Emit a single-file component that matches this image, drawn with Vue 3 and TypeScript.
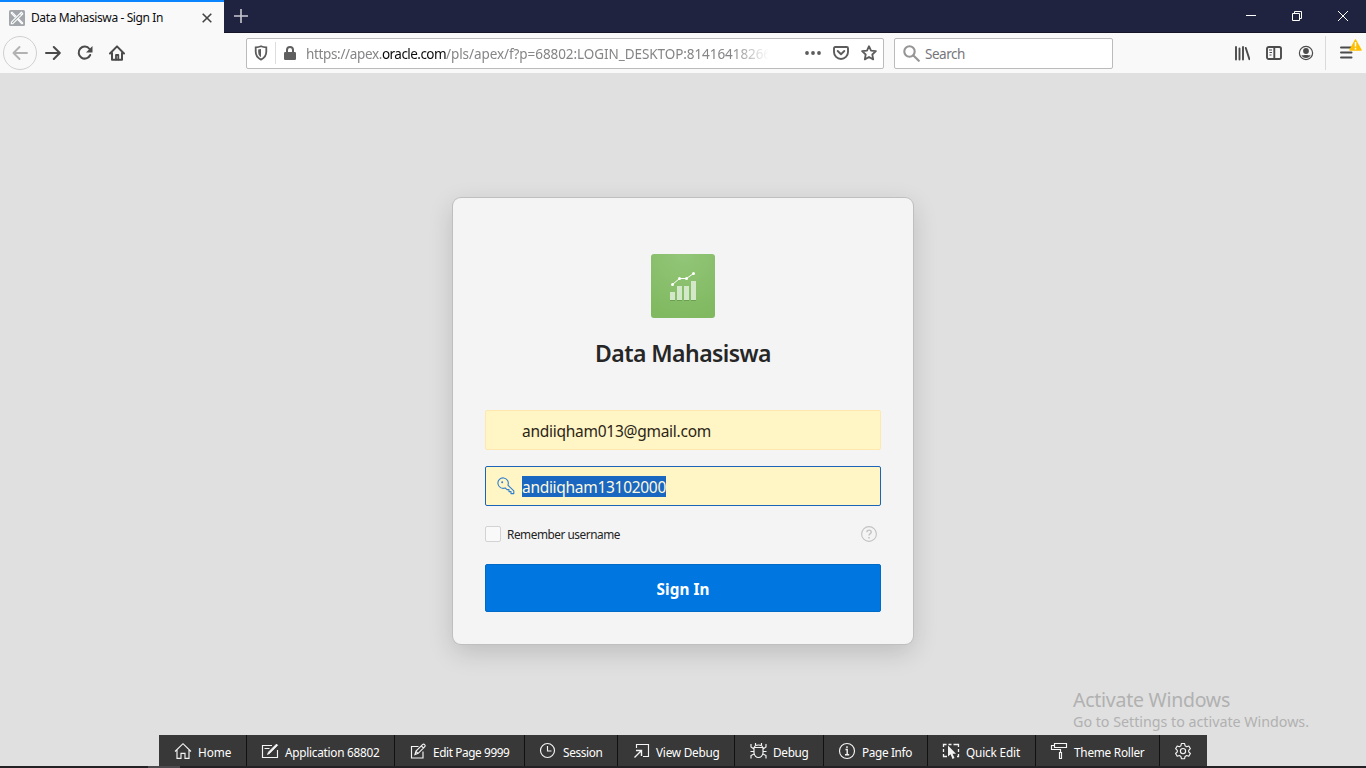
<script setup lang="ts">
import type { Directive } from 'vue'

interface ToolItem {
  id: string
  label: string
  width: number
  textWidth: number
  iconLeft: number
  textLeft: number
}

// Tracks a label so that it occupies the given number of pixels.
const vFit: Directive<HTMLElement, number> = {
  mounted(el, binding) {
    const natural = el.getBoundingClientRect().width
    const count = (el.textContent ?? '').length
    if (count > 0) el.style.letterSpacing = `${(binding.value - natural) / count}px`
  },
}

const tools: ToolItem[] = [
  { id: 'home', label: 'Home', width: 88, textWidth: 33.5, iconLeft: 15, textLeft: 39 },
  { id: 'app', label: 'Application 68802', width: 148, textWidth: 94.5, iconLeft: 14, textLeft: 38 },
  { id: 'edit', label: 'Edit Page 9999', width: 130, textWidth: 76.5, iconLeft: 14, textLeft: 38 },
  { id: 'session', label: 'Session', width: 93, textWidth: 39.5, iconLeft: 14, textLeft: 38 },
  { id: 'view', label: 'View Debug', width: 117, textWidth: 63.5, iconLeft: 14, textLeft: 38 },
  { id: 'debug', label: 'Debug', width: 89, textWidth: 35.5, iconLeft: 14, textLeft: 38 },
  { id: 'info', label: 'Page Info', width: 104, textWidth: 50, iconLeft: 14, textLeft: 38 },
  { id: 'quick', label: 'Quick Edit', width: 108, textWidth: 54, iconLeft: 14, textLeft: 38 },
  { id: 'theme', label: 'Theme Roller', width: 124, textWidth: 70.5, iconLeft: 14, textLeft: 38 },
  { id: 'gear', label: '', width: 47, textWidth: 0, iconLeft: 14, textLeft: 38 },
]
</script>

<template>
  <div class="screen">
    <header class="titlebar">
      <div class="tab">
        <svg class="favicon" width="16" height="16" viewBox="0 0 16 16">
          <rect width="16" height="16" rx="1.5" fill="#a3a7ab" />
          <g fill="none" stroke="#fff" stroke-width="1.1" stroke-linecap="round" stroke-linejoin="round">
            <path d="M3.2 2.4 7 6.2M2.4 3.4 6 7M2.4 3.4C2 2.6 2.6 2 3.2 2.4M9.4 8.6l4.2 4.2M8.6 9.4l4 4.2M13.6 12.8c.4.8-.4 1.2-1 .8" />
            <path d="M12.4 2.2 2.4 12.2l-.1 1.6 1.6-.2L13.8 3.8zM11.2 3.4l1.5 1.5" />
          </g>
        </svg>
        <div class="tab-title"><span v-fit="132">Data Mahasiswa - Sign In</span></div>
        <svg class="tab-close" width="10" height="10" viewBox="0 0 10 10"><path d="m.7.7 8.6 8.6M9.3.7.7 9.3" stroke="#444" stroke-width="1.6" /></svg>
      </div>
      <svg class="new-tab" width="14" height="14" viewBox="0 0 14 14"><path d="M7 0v14M0 7h14" stroke="#c9c9d2" stroke-width="1.6" /></svg>
      <div class="window-controls">
        <svg width="46" height="33" viewBox="0 0 46 33"><path d="M18 15.5h10" stroke="#fff" /></svg>
        <svg width="46" height="33" viewBox="0 0 46 33"><path d="M18.5 13.5h7v7h-7zM20.5 13.5v-2h7v7h-2" fill="none" stroke="#fff" /></svg>
        <svg width="46" height="33" viewBox="0 0 46 33"><path d="m18 11 10 10M28 11 18 21" stroke="#fff" /></svg>
      </div>
    </header>

    <nav class="navbar">
      <div class="back">
        <svg width="16" height="16" viewBox="0 0 16 16" fill="none" stroke="#b2b2b3" stroke-width="1.9" stroke-linecap="round" stroke-linejoin="round"><path d="M15 8H1.5M7.500 2l-6 6 6 6" /></svg>
      </div>
      <svg class="forward" width="16" height="16" viewBox="0 0 16 16" fill="none" stroke="#4b4b4c" stroke-width="2" stroke-linecap="round" stroke-linejoin="round"><path d="M1 8h13.5M8.8 2l6 6-6 6" /></svg>
      <svg class="reload" width="16" height="16" viewBox="0 0 16 16" fill="none" stroke="#4b4b4c" stroke-width="2"><path d="M13.2 10A6 6 0 1 1 12.5 4" stroke-linecap="round" /><path d="M15.5 1v6.6H9z" fill="#4b4b4c" stroke="none" /></svg>
      <svg class="home" width="16" height="16" viewBox="0 0 16 16" fill="none" stroke="#4b4b4c" stroke-width="2" stroke-linecap="round" stroke-linejoin="round"><path d="M1 8.5 8 1.4l7 7.1M3 8v6.8h10V8" /><path d="M7 14.5V10h2.3v4.5" stroke-width="1.8" /></svg>

      <div class="urlbar">
        <svg class="shield" width="14" height="16" viewBox="0 0 14 16"><path d="M7 1.2c2 .9 3.5 1.1 5.3 1.2v4.2c0 4.2-2 6.6-5.3 8-3.3-1.4-5.3-3.8-5.3-8V2.400C3.500 2.300 5 2.100 7 1.200z" fill="none" stroke="#5c5c5d" stroke-width="1.8" /><path d="M7 4v8.300C5 11 4.200 9.200 4.200 6.900V4.500z" fill="#5c5c5d" /></svg>
        <i class="url-divider"></i>
        <svg class="lock" width="12" height="14" viewBox="0 0 12 14"><path d="M3 7V4a3 3 0 0 1 6 0v3" fill="none" stroke="#5f5f60" stroke-width="2" /><rect x="0" y="6" width="12" height="8" rx="1.2" fill="#5f5f60" /></svg>
        <div class="url"><span v-fit="76">https://apex.</span><b v-fit="64">oracle.com</b><span v-fit="325">/pls/apex/f?p=68802:LOGIN_DESKTOP:81416418266</span></div>
        <svg class="dots" width="16" height="4" viewBox="0 0 16 4" fill="#5c5c5d"><circle cx="2" cy="2" r="1.9" /><circle cx="8" cy="2" r="1.9" /><circle cx="14" cy="2" r="1.9" /></svg>
        <svg class="pocket" width="16" height="14" viewBox="0 0 16 14" fill="none" stroke="#5c5c5d" stroke-width="1.9" stroke-linecap="round" stroke-linejoin="round"><path d="M2.2 1h11.600Q15 1 15 2.200V6A7 7 0 0 1 1 6V2.200Q1 1 2.200 1z" /><path d="m4.700 5 3.300 3.200L11.300 5" /></svg>
        <svg class="star" width="16" height="16" viewBox="0 0 16 16" fill="none" stroke="#5c5c5d" stroke-width="1.8" stroke-linejoin="round"><path d="m8 1.200 2 4.400 4.900.6-3.600 3.300.9 4.900L8 12l-4.200 2.400.9-4.900L1.100 6.200 6 5.600z" /></svg>
      </div>
      <div class="search">
        <svg width="17" height="17" viewBox="0 0 17 17" fill="none" stroke="#959596" stroke-width="2.100"><circle cx="6.500" cy="6.500" r="5.200" /><path d="m10.400 10.400 5.400 5.400" stroke-linecap="round" /></svg>
        <span v-fit="40">Search</span>
      </div>

      <div class="nav-right">
        <svg class="library" width="16" height="16" viewBox="0 0 16 16" stroke="#4b4b4c" stroke-width="1.900" stroke-linecap="round"><path d="M2 2v12.500M5.500 3.500v11M9 2v12.500M11.800 3l3.600 11.200" /></svg>
        <svg class="sidebar" width="16" height="14" viewBox="0 0 16 14" fill="none" stroke="#4b4b4c" stroke-width="1.900"><rect x="1" y="1" width="14" height="12" rx="1.800" /><path d="M8.300 1v12" /><path d="M3 4h3M3.500 6.500h2.500M3.500 9h2" stroke-width="1" /></svg>
        <svg class="account" width="16" height="16" viewBox="0 0 16 16"><circle cx="8" cy="8" r="6.600" fill="none" stroke="#4b4b4c" stroke-width="1.200" /><circle cx="8" cy="6" r="2.900" fill="#4b4b4c" /><path d="M3.300 9.700c1 .8 2.600.5 3.200.2h3c.6.300 2.200.600 3.200-.2-.8 2.200-2.600 3.300-4.700 3.300s-3.900-1.100-4.700-3.300z" fill="#4b4b4c" /></svg>
        <i class="nav-divider"></i>
        <svg class="menu" width="24" height="26" viewBox="0 0 24 26"><path d="M2 10.500h10.500M2 15.500h10.500M2 20.500h10.500" stroke="#4b4b4c" stroke-width="2" stroke-linecap="round" /><path d="M16.500 3 22 13h-11z" fill="#ffbf00" stroke="#ffbf00" stroke-width="1.500" stroke-linejoin="round" /><path d="M16.500 5v4.500M16.500 10.800v1.600" stroke="#fff" stroke-width="1.500" /></svg>
      </div>
    </nav>

    <main class="page">
      <section class="card">
        <svg class="logo" width="64" height="64" viewBox="0 0 64 64">
          <defs><radialGradient id="leaf" cx="50%" cy="0%" r="100%"><stop offset="0" stop-color="#93c679" /><stop offset="1" stop-color="#80b960" /></radialGradient></defs>
          <rect width="64" height="64" rx="3" fill="url(#leaf)" />
          <path d="M19 46h5v1h-5zm7 0h5v1h-5zm7 0h5v1h-5zm7 0h5v1h-5z" fill="#6ba052" />
          <path d="M19 38h5v8h-5zm7-6h5v14h-5zm7 0h5v14h-5zm7-5h5v19h-5z" fill="#d3e8c9" />
          <path d="m21.500 30.500 7-6h7l7-5" fill="none" stroke="#fff" />
          <g fill="#fff"><circle cx="21.500" cy="30.500" r="1.500" /><circle cx="28.500" cy="24.500" r="1.500" /><circle cx="35.500" cy="24.500" r="1.500" /><circle cx="42.500" cy="19.500" r="1.500" /></g>
        </svg>
        <h1><span v-fit="176">Data Mahasiswa</span></h1>
        <div class="field"><span v-fit="189">andiiqham013@gmail.com</span></div>
        <div class="field focused">
          <svg class="key" width="18" height="18" viewBox="0 0 18 18" fill="none" stroke="#2e7fd0" stroke-width="1.100" stroke-linejoin="round"><path d="M10.900 8.100A5.200 5.200 0 1 0 8.100 10.900L10 12.600h2v2h2v2h2.800v-2.700z" /><circle cx="5.200" cy="5.200" r="1" fill="#2e7fd0" stroke="none" /></svg>
          <span v-fit="144" class="selected">andiiqham13102000</span>
        </div>
        <div class="remember">
          <i class="checkbox"></i><span v-fit="113">Remember username</span>
          <svg class="help" width="16" height="16" viewBox="0 0 16 16" fill="none" stroke="#c2c2c2" stroke-width="1.100"><circle cx="8" cy="8" r="7.400" /><path d="M5.900 6.200c0-2.800 4.300-2.700 4.300 0C10.200 7.700 8 7.700 8 9.500" stroke-width="1.400" /><path d="M8 11v1.500" stroke-width="1.500" /></svg>
        </div>
        <button class="sign-in"><span v-fit="53">Sign In</span></button>
      </section>
    </main>

    <aside class="watermark">
      <p class="wm-title"><span v-fit="157">Activate Windows</span></p>
      <p class="wm-sub"><span v-fit="236">Go to Settings to activate Windows.</span></p>
    </aside>

    <footer class="devbar">
      <div v-for="t in tools" :key="t.id" class="tool" :style="{ width: t.width + 'px', paddingLeft: t.iconLeft + 'px' }">
        <svg width="18" height="18" viewBox="0 0 18 18" fill="none" stroke="#f4f4f4" stroke-width="1.150" :style="{ marginRight: t.textLeft - t.iconLeft - 18 + 'px' }">
          <path v-if="t.id === 'home'" d="M1 9.500 9 1.700l8 7.800M3 8v8.400h4v-5h4v5h4V8" />
          <g v-else-if="t.id === 'app'"><path d="M11 3.500H1.500v12h15V8M3.500 6.500h5" /><path d="m6.500 12.500 1-2.400 8-8 1.200 1.200-7.900 8z" fill="#f4f4f4" stroke-width=".8" /></g>
          <g v-else-if="t.id === 'edit'"><path d="M9.500 4.500h-7v11.500h11.500V9.500" /><path d="m6 12.500 1-3.400 6.500-6.500q1.200-1 2.100 0 1.100 1.100 0 2.200L9.200 11.300zm6.300-8.700L14.500 6M7 9.300l2 2" /></g>
          <g v-else-if="t.id === 'session'"><circle cx="8.500" cy="8.500" r="7" /><path d="M8.500 4v5h4" /></g>
          <g v-else-if="t.id === 'view'"><path d="M4.500 6V2.500h12v12H11" /><path d="M4 8.500h5.500V14M9.500 8.500l-7 7" stroke-width="1.400" /></g>
          <g v-else-if="t.id === 'debug'"><path d="M5.500 5.500Q5.500 3 9.500 3t4 2.500M5 5.500h9v5.500q-.9 4.500-4.500 4.500T5 11zM1.500 9.500H5m9 0h3.500M2 2v3l3 2m12-5v3l-3 2M2 16.500v-3l3-1.500m12 4.500v-3L14 12M6.500 1v2m6-2v2" /></g>
          <g v-else-if="t.id === 'info'"><circle cx="9" cy="9" r="7.500" /><path d="M7.500 7.500h1.700v5M7 12.700h4.200M9 4.300v1.800" stroke-width="1.400" /></g>
          <g v-else-if="t.id === 'quick'"><path d="M1.500 5V2.500h3m2 0h3m2 0h5V5m0 2v3m0 2v2.500H15M5 14.500H1.500V12m0-5v3" stroke-width="1.300" /><path d="M6 3.500v11l2.600-2.200L10.500 17l2-.9-2-4.300H14z" fill="#f4f4f4" stroke="none" /></g>
          <g v-else-if="t.id === 'theme'"><path d="M4.500 1.500h12v4h-12zM4.500 3.500h-3v4h9v3M9.500 10.500h2v6h-2z" /></g>
          <g v-else stroke-linejoin="round"><path d="M7.400 1.500h3.200l.5 2.300 1.500.9 2.200-.7 1.600 2.700-1.700 1.600v1.600l1.700 1.600-1.600 2.700-2.200-.7-1.500.9-.5 2.300H7.400l-.5-2.300-1.500-.9-2.200.7-1.600-2.700 1.700-1.600V8.300L1.600 6.700 3.200 4l2.200.7 1.500-.9z" /><circle cx="9" cy="9.100" r="2.600" /></g>
        </svg>
        <span v-if="t.label" v-fit="t.textWidth">{{ t.label }}</span>
      </div>
    </footer>
    <div class="bottom-edge"><i></i></div>
  </div>
</template>

<style>
body { margin: 0; overflow: hidden; }
</style>

<style scoped>
* { box-sizing: border-box; }
.screen { position: relative; width: 1366px; height: 768px; overflow: hidden; background: #e0e0e0; color: #222; font-family: "Noto Sans", "Open Sans", sans-serif; font-size: 12px; display: flex; flex-direction: column; }
svg { flex: none; display: block; }
span, b { white-space: nowrap; }
.titlebar { height: 33px; flex: none; background: #202340; display: flex; border-bottom: 1px solid #141627; }
.tab { width: 224px; height: 33px; flex: none; background: #f9f9fa; border-top: 2px solid #0a84ff; display: flex; align-items: center; padding-left: 9px; color: #0c0c0d; }
.tab-title { margin-left: 6px; width: 171px; }
.new-tab { margin: 9px 0 0 10px; }
.window-controls { margin-left: auto; display: flex; }
.navbar { height: 40px; flex: none; background: #f9f9fa; display: flex; align-items: center; }
.back { width: 34px; height: 34px; margin-left: 3px; border: 1px solid #d0d0d0; border-radius: 50%; display: grid; place-items: center; }
.forward { margin-left: 8px; }
.reload { margin-left: 16px; }
.home { margin-left: 16px; }
.urlbar { width: 638px; height: 31px; margin-left: 121px; background: #fff; border: 1px solid #bbb; border-radius: 2px; display: flex; align-items: center; padding-left: 7px; }
.url-divider { width: 1px; height: 22px; background: #ddd; margin: 0 8px 0 7px; }
.url { width: 466px; margin: 2px 0 0 10px; white-space: nowrap; display: flex; color: #858587; font-size: 13.500px; line-height: 24px; mask-image: linear-gradient(90deg, #000 425px, transparent 463px); }
.url b { font-weight: 400; color: #0c0c0d; }
.dots { margin-left: 33px; }
.pocket { margin-left: 12px; }
.star { margin-left: 12px; }
.search { width: 219px; height: 31px; margin-left: 10px; background: #fff; border: 1px solid #bbb; border-radius: 2px; display: flex; align-items: center; padding-left: 8px; font-size: 13.500px; color: #76767a; }
.search span { margin: 1px 0 0 5px; }
.nav-right { display: flex; align-items: center; margin-left: 121px; }
.sidebar, .account { margin-left: 16px; }
.nav-divider { width: 1px; height: 34px; background: #dadada; margin-left: 11px; }
.menu { margin: -6px 0 0 13px; }
.page { flex: 1; display: flex; justify-content: center; padding-top: 125px; }
.card { width: 460px; height: 446px; background: #f4f4f4; border-radius: 8px; padding: 56px 32px 32px; box-shadow: 0 0 0 1px #bfbfbf, 0 8px 26px rgba(0, 0, 0, 0.16); display: flex; flex-direction: column; }
.logo { align-self: center; }
h1 { margin: 18px 0 0; height: 36px; line-height: 35px; font-size: 23px; font-weight: 600; text-align: center; color: #262626; }
.field { height: 40px; margin-top: 38px; background: #fff5c5; border: 1px solid #ffe8b0; border-radius: 2px; padding: 2px 0 0 36px; display: flex; align-items: center; font-size: 15.500px; color: #2b2416; }
.field.focused { margin-top: 16px; padding: 0 0 0 11px; border-color: #1b64b8; }
.key { margin-right: 7px; }
.selected { background: #1967c0; color: #fff9df; height: 21px; line-height: 22px; margin-top: 1px; }
.remember { height: 18px; margin-top: 19px; display: flex; align-items: center; font-size: 11.800px; }
.checkbox { width: 16px; height: 16px; border: 1px solid #d3d3d3; border-radius: 2px; background: #f9f9f9; margin-right: 6px; }
.help { margin: 0 4px 0 auto; }
.sign-in { margin-top: 21px; height: 48px; flex: none; border: 1px solid #006ac8; border-radius: 2px; background: #0077e0; color: #fff; font: 700 15.300px "Noto Sans", "Open Sans", sans-serif; padding: 2px 0 0; text-align: center; }
.watermark { position: absolute; left: 1073px; top: 686px; color: #b1b1b1; }
p { margin: 0; }
.wm-title { font-size: 19.500px; line-height: 27px; }
.wm-sub { font-size: 14.300px; line-height: 18px; }
.devbar { position: relative; height: 31px; width: 1048px; margin-left: 159px; flex: none; display: flex; background: #383838; color: #fff; }
.tool { flex: none; height: 31px; display: flex; align-items: center; border-right: 1px solid #111; }
.tool:last-child { border-right: 0; }
.tool span { margin-top: 2px; font-size: 11.800px; }
.bottom-edge { height: 2px; flex: none; background: #242124; }
.bottom-edge i { display: block; width: 32px; height: 2px; margin-left: 148px; background: #4d4a4d; }
</style>
